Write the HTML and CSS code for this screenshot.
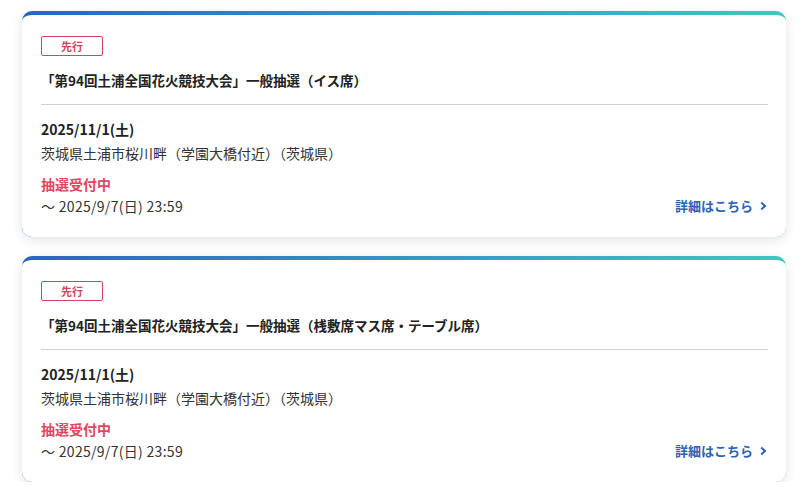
FILE: index.html
```html
<!DOCTYPE html>
<html>
<head>
<meta charset="utf-8">
<title>抽選一覧</title>
<link rel="stylesheet" href="styles.css">
</head>
<body>
<div class="list">
<div class="card">
<span class="tag">先行</span>
<p class="title">「第94回土浦全国花火競技大会」一般抽選（イス席）</p>
<div class="info">
<p class="date">2025/11/1(土)</p>
<p class="place">茨城県土浦市桜川畔（学園大橋付近）（茨城県）</p>
<div class="foot">
<div>
<p class="status">抽選受付中</p>
<p class="limit">〜 2025/9/7(日) 23:59</p>
</div>
<a href="#" class="more">詳細はこちら<span class="arrow"></span></a>
</div>
</div>
</div>
<div class="card">
<span class="tag">先行</span>
<p class="title">「第94回土浦全国花火競技大会」一般抽選（桟敷席マス席・テーブル席）</p>
<div class="info">
<p class="date">2025/11/1(土)</p>
<p class="place">茨城県土浦市桜川畔（学園大橋付近）（茨城県）</p>
<div class="foot">
<div>
<p class="status">抽選受付中</p>
<p class="limit">〜 2025/9/7(日) 23:59</p>
</div>
<a href="#" class="more">詳細はこちら<span class="arrow"></span></a>
</div>
</div>
</div>
</div>
</body>
</html>
```

FILE: styles.css
```css
*{
margin: 0;
padding: 0;
box-sizing: border-box;
}
body{
background: #fff;
font-family: "Noto Sans CJK JP", "Noto Sans", sans-serif;
color: #222;
}
.list{
display: flex;
flex-direction: column;
gap: 19px;
padding: 11px 23px 0 22px;
}
.card{
height: 226px;
border-top: 4px solid transparent;
border-radius: 10px;
background: linear-gradient(#fff, #fff) padding-box, linear-gradient(90deg, #2c63c3, #3fc7c0) border-box;
box-shadow: 0 3px 12px rgba(40, 50, 70, 0.13);
padding: 21px 18px 0 19px;
}
.tag{
display: flex;
align-items: center;
justify-content: center;
width: 62px;
height: 20px;
border: 1px solid #d6435e;
border-radius: 2px;
color: #d6435e;
font-size: 11px;
font-weight: 700;
}
.title{
font-size: 13.5px;
font-weight: 700;
line-height: 20px;
margin-top: 14px;
padding-bottom: 14px;
border-bottom: 1px solid #cfcfcf;
}
.info{
padding-top: 14px;
}
.date{
font-size: 14px;
font-weight: 700;
line-height: 20px;
}
.place{
font-size: 14px;
line-height: 20px;
margin-top: 4px;
color: #333;
}
.foot{
display: flex;
justify-content: space-between;
align-items: flex-end;
margin-top: 11px;
}
.status{
font-size: 14px;
font-weight: 700;
line-height: 20px;
color: #e0465f;
}
.limit{
font-size: 14px;
line-height: 20px;
margin-top: 2px;
color: #333;
letter-spacing: 0.3px;
}
.more{
display: flex;
align-items: center;
gap: 6px;
font-size: 13px;
font-weight: 700;
line-height: 20px;
color: #2f63b6;
text-decoration: none;
}
.arrow{
width: 6px;
height: 6px;
border-top: 2px solid #2f63b6;
border-right: 2px solid #2f63b6;
transform: rotate(45deg);
margin-right: 3px;
}
```
